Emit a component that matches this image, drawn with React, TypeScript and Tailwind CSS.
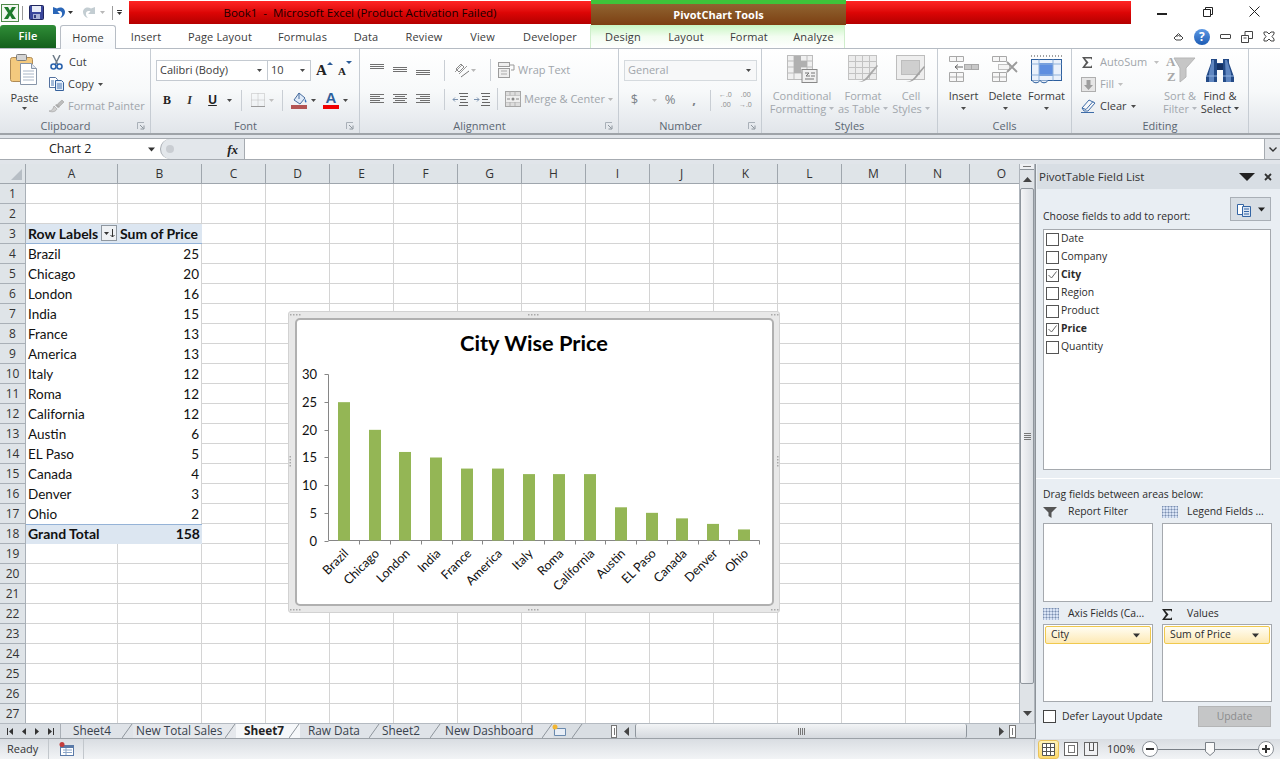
import React from "react";

const Caret = ({ c = "text-[#4a4a4a]", w = 5 }: { c?: string; w?: number }) => (
  <svg width={w} height={Math.ceil(w * 0.6)} viewBox="0 0 5 3" className={c + " shrink-0"}>
    <path d="M0 0h5L2.500 3z" fill="currentColor" />
  </svg>
);

const Lines = ({ rows, color = "#707070" }: { rows: [number, number, number][]; color?: string }) => (
  <svg width="16" height="16" viewBox="0 0 16 16">
    {rows.map((r, i) => (
      <rect key={i} x={r[0]} y={r[1]} width={r[2]} height="1" fill={color} />
    ))}
  </svg>
);

const Launcher = () => (
  <svg width="8" height="8" viewBox="0 0 8 8" className="shrink-0">
    <path d="M0.500 7V0.500H7" fill="none" stroke="#a9b0b8" />
    <path d="M3 3l3.500 3.500M7 3.500V7H3.500" fill="none" stroke="#8c949c" />
  </svg>
);

const Group = ({ w, label, launcher, children }: { w: string; label: string; launcher?: boolean; children: React.ReactNode }) => (
  <div className={w + " h-full flex flex-col border-r border-[#c6ccd3] shrink-0"}>
    <div className="h-[70px] flex">{children}</div>
    <div className={"h-[16px] relative flex items-center justify-center text-[11px] leading-none text-[#5b6672] " + (launcher ? "pr-[19px]" : "")}>
      {label}
      {launcher && (
        <span className="absolute right-[5px] top-[5px] flex">
          <Launcher />
        </span>
      )}
    </div>
  </div>
);

const Sep = ({ h = "h-[21px]" }: { h?: string }) => <div className={"w-px bg-[#c9ced4] shrink-0 " + h} />;

const ExcelLogo = () => (
  <svg width="18" height="18" viewBox="0 0 18 18">
    <rect x="0.500" y="0.500" width="17" height="17" fill="#f4f8f2" stroke="#4f8a4a" />
    <path d="M3 3h4l2 3.500L11 3h4l-4 6 4 6h-4l-2-3.500L7 15H3l4-6z" fill="#1f7a2c" />
  </svg>
);
const Save = () => (
  <svg width="15" height="15" viewBox="0 0 15 15">
    <rect x="0.500" y="0.500" width="14" height="14" rx="1" fill="#3a479c" stroke="#20265e" />
    <rect x="3" y="1" width="9" height="6" fill="#e8ecf7" />
    <rect x="4" y="9" width="7" height="5" fill="#aab2d6" />
    <rect x="5" y="10" width="2" height="3" fill="#333c80" />
  </svg>
);
const Undo = ({ color }: { color: string }) => (
  <svg width="14" height="14" viewBox="0 0 14 14">
    <path d="M1 1v7h7L5.500 5.500C7 4.500 9.500 5 10 7c.4 1.800-.3 3.500-2 5 3-.7 5-3 5-6 0-3.500-4-6-8-3.500z" fill={color} />
  </svg>
);
const Redo = () => (
  <svg width="14" height="14" viewBox="0 0 14 14">
    <path d="M13 1v7H6l2.500-2.500C7 4.500 4.500 5 4 7c-.4 1.800.3 3.500 2 5-3-.7-5-3-5-6 0-3.500 4-6 8-3.500z" fill="#c3cdd2" />
  </svg>
);

const Paste = () => (
  <svg width="28" height="31" viewBox="0 0 28 31">
    <rect x="0.500" y="3.500" width="22" height="24" rx="2" fill="#f3c97e" stroke="#b08b55" />
    <rect x="6.500" y="0.500" width="10" height="6" rx="1" fill="#d4d4d4" stroke="#7d7d7d" />
    <path d="M10.500 9.500h11l5 5v16h-16z" fill="#fff" stroke="#8795a8" />
    <path d="M21.500 9.500v5h5" fill="#dfe6f0" stroke="#8795a8" />
    <path d="M13 17h11M13 20h11M13 23h11M13 26h11" stroke="#a8b5c6" />
  </svg>
);
const Cut = () => (
  <svg width="13" height="15" viewBox="0 0 13 15">
    <path d="M3 0l5 10M10 0L5 10" stroke="#6d7a88" strokeWidth="1.500" />
    <circle cx="3.500" cy="11.500" r="2.500" fill="none" stroke="#2a62ac" strokeWidth="1.600" />
    <circle cx="9.500" cy="11.500" r="2.500" fill="none" stroke="#2a62ac" strokeWidth="1.600" />
  </svg>
);
const Copy = () => (
  <svg width="15" height="14" viewBox="0 0 15 14">
    <path d="M0.500 0.500h6l2 2v8h-8z" fill="#fff" stroke="#53719f" />
    <path d="M6.500 3.500h6l2 2v8h-8z" fill="#e3ecf8" stroke="#35619c" />
    <path d="M8 7h5M8 9h5M8 11h5M2 4h3M2 6h3M2 8h3" stroke="#4a78b4" />
  </svg>
);
const Painter = () => (
  <svg width="16" height="14" viewBox="0 0 16 14">
    <path d="M0 12c3 0 4-2 5-5l3 3c-1 2-4 4-8 2z" fill="#cfcfcf" stroke="#9c9c9c" strokeWidth=".6" />
    <path d="M6 6l3 3 2-1-3-3z" fill="#aaa" />
    <path d="M8.500 5L13 1l2 2-4.500 4.500z" fill="#bcbcbc" stroke="#999" strokeWidth=".5" />
  </svg>
);
const Borders = () => (
  <svg width="14" height="14" viewBox="0 0 14 14">
    <path d="M.5.500h13v13H.5zM7 .5v13M.5 7h13" fill="none" stroke="#bcbcbc" strokeDasharray="1 1" />
    <path d="M0 13.500h14" stroke="#9a9a9a" />
  </svg>
);
const FillColor = () => (
  <svg width="17" height="17" viewBox="0 0 17 17">
    <path d="M8 1l6 5-5 6-6-4z" fill="#dfeaf8" stroke="#466c9e" />
    <path d="M8 1v6" stroke="#466c9e" />
    <path d="M14 7c1.500 1.500 2 3 1 3.500s-1.600-1.500-1-3.500z" fill="#3672bb" />
    <rect x="0" y="13" width="16" height="4" fill="#b35453" />
  </svg>
);
const Orientation = () => (
  <svg width="16" height="15" viewBox="0 0 16 15">
    <path d="M2 6l5-5 3 3-5 5z" fill="none" stroke="#888" />
    <path d="M1 9l7-7M5 11l8-8" stroke="#999" />
    <path d="M7 14l8-6" stroke="#777" />
  </svg>
);
const Indent = ({ right }: { right?: boolean }) => (
  <svg width="16" height="13" viewBox="0 0 16 13">
    <path d={right ? "M0 6.500h5M3 4.500l2 2-2 2" : "M6 6.500H1M3 4.500l-2 2 2 2"} fill="none" stroke="#7c93b0" />
    <path d="M7 .5h9M8 3.500h8M8 6.500h6M8 9.500h8M7 12.500h9" stroke="#666" />
  </svg>
);
const WrapIcon = () => (
  <svg width="17" height="16" viewBox="0 0 17 16">
    <rect x="0.500" y="0.500" width="11" height="4" fill="#eee" stroke="#9b9b9b" />
    <rect x="0.500" y="6.500" width="11" height="9" fill="#eee" stroke="#9b9b9b" />
    <path d="M3 9h6M3 12h6" stroke="#aaa" />
    <path d="M12 3h4v5h-3" fill="none" stroke="#999" />
  </svg>
);
const MergeIcon = () => (
  <svg width="16" height="16" viewBox="0 0 16 16">
    <rect x="0.500" y="0.500" width="15" height="15" fill="#ddd" stroke="#a6a6a6" />
    <path d="M.5 5h15M.5 11h15M5 .5v4M10 .5v4M5 11v4M10 11v4" stroke="#b3b3b3" />
    <rect x="1" y="5" width="14" height="6" fill="#eee" />
    <path d="M2 8h3M14 8h-3" stroke="#888" />
    <circle cx="8" cy="8" r="1.500" fill="#888" />
  </svg>
);
const CondFormat = () => (
  <svg width="31" height="28" viewBox="0 0 31 28">
    <rect x="0.500" y="0.500" width="25" height="24" fill="#f0f0f0" stroke="#bcbcbc" />
    <path d="M7 .5v24M20 .5v24M.5 6h25M.5 12h25M.5 18h25" stroke="#bcbcbc" />
    <path d="M7 1h7v5h6v6h-6v6H7z" fill="#b0b0b0" />
    <rect x="15" y="14.500" width="15" height="13" fill="#f0f0f0" stroke="#888" />
    <path d="M18 18h4l-3 3h4M24 18h4M24 21h4M18 24h9" fill="none" stroke="#777" />
  </svg>
);
const FmtTable = () => (
  <svg width="31" height="28" viewBox="0 0 31 28">
    <rect x="0.500" y="0.500" width="28" height="24" fill="#ececec" stroke="#c2c2c2" />
    <path d="M7.500 .5v24M14.500 .5v24M21.500 .5v24M.5 6.500h28M.5 12.500h28M.5 18.500h28" stroke="#c2c2c2" />
    <path d="M10 27c5 0 8-4 11-8l8-9 1 1-8 10c-3 4-6 6-12 6z" fill="#a8a8a8" />
  </svg>
);
const CellStyle = () => (
  <svg width="30" height="28" viewBox="0 0 30 28">
    <rect x="0.500" y="0.500" width="28" height="24" fill="#eee" stroke="#bdbdbd" />
    <rect x="5.500" y="5.500" width="18" height="14" fill="#cfcfcf" stroke="#bdbdbd" />
    <path d="M10 27c5 0 8-4 11-8l7-8 1 1-8 10c-3 4-6 5-11 5z" fill="#a2a2a2" />
  </svg>
);
const InsertIcon = () => (
  <svg width="30" height="26" viewBox="0 0 30 26">
    <path d="M.5.500h14v5H.5zM7.500.5v5M.5 16.500h14v9H.5zM7.500 16.500v9M.5 21h14" fill="#f7f7f7" stroke="#a8a8a8" />
    <rect x="15.500" y="8.500" width="14" height="5" fill="#c8c8c8" stroke="#a8a8a8" />
    <path d="M22.500 8.500v5" stroke="#a8a8a8" />
    <path d="M6 11h8M6 11l3-2.500M6 11l3 2.500" fill="none" stroke="#666" />
  </svg>
);
const DeleteIcon = () => (
  <svg width="26" height="26" viewBox="0 0 26 26">
    <path d="M.5.500h14v5H.5zM7.500.5v5M.5 16.500h14v9H.5zM7.500 16.500v9M.5 21h14" fill="#f7f7f7" stroke="#a8a8a8" />
    <rect x="6.500" y="8.500" width="11" height="5" fill="#f4f4f4" stroke="#888" strokeDasharray="1 1" />
    <path d="M15 6l10 10M25 6L15 16" stroke="#9b9b9b" strokeWidth="1.800" />
  </svg>
);
const FormatIcon = () => (
  <svg width="31" height="29" viewBox="0 0 31 29">
    <path d="M0 1h31" stroke="#444" strokeDasharray="1 2" />
    <rect x="0.500" y="4.500" width="30" height="21" fill="#eaf1fb" stroke="#2d5f9e" />
    <rect x="8" y="8" width="14" height="13" fill="#5e8ee0" />
    <path d="M8 4.500v21M22 4.500v21M.5 9h30M.5 20h30" stroke="#8fb1da" />
    <path d="M1 25.500c2 3 6 3 8 0M9 25.500c2 3 6 3 8 0" fill="#eaf1fb" stroke="#2d5f9e" />
  </svg>
);
const Sigma = ({ c = "#555" }: { c?: string }) => (
  <svg width="11" height="11" viewBox="0 0 11 11">
    <path d="M0 0h10v3L9 1.500H3L6.500 5.500 3 9.500h6L10 8v3H0l4-5.500z" fill={c} />
  </svg>
);
const FillIcon = () => (
  <svg width="15" height="15" viewBox="0 0 15 15">
    <rect x="0.500" y="0.500" width="14" height="14" fill="#e6e6e6" stroke="#aeaeae" />
    <path d="M5.500 3h4v5H12l-4.500 5L3 8h2.500z" fill="#9d9d9d" />
  </svg>
);
const Eraser = () => (
  <svg width="15" height="14" viewBox="0 0 15 14">
    <path d="M1 9l7-8 6 3-7 8H3z" fill="#f6f7f9" stroke="#3d6ca8" />
    <path d="M1 9l4 1.500L12 2.500" fill="none" stroke="#3d6ca8" />
    <path d="M0 13.500h13" stroke="#3d6ca8" />
  </svg>
);
const SortFilter = () => (
  <svg width="31" height="28" viewBox="0 0 31 28">
    <path d="M9 3h21L21 13v9l-6 5V13z" fill="#c6c6c6" stroke="#b6b6b6" />
    <text x="1" y="11" fontSize="13" fontWeight="700" fontFamily="Liberation Serif, serif" fill="#a8a8a8">A</text>
    <text x="2" y="26" fontSize="13" fontWeight="700" fontFamily="Liberation Serif, serif" fill="#a8a8a8">Z</text>
  </svg>
);
const Binoculars = () => (
  <svg width="28" height="27" viewBox="0 0 28 27">
    <path d="M5 3h6v4h6V3h6v4l5 14v5H17V14h-6v12H0v-5L5 7z" fill="#234a86" />
    <path d="M6 4h2v22H3V17zM19 4h2l4 13v9h-5z" fill="#5f86c0" />
    <rect x="11" y="8" width="6" height="6" fill="#153264" />
    <path d="M0 20h11M17 20h11" stroke="#8fb0de" />
  </svg>
);

const TitleBar = () => (
  <div className="h-[25px] flex bg-white shrink-0">
    <div className="w-[129px] flex items-center shrink-0 pl-[1px]">
      <ExcelLogo />
      <div className="w-px h-[14px] bg-[#9a9a9a] ml-[3px]" />
      <div className="ml-[6px] flex"><Save /></div>
      <div className="ml-[8px] flex"><Undo color="#2a66b8" /></div>
      <div className="ml-[2px] mr-[9px]"><Caret c="text-[#333]" /></div>
      <Redo />
      <div className="ml-[4px]"><Caret c="text-[#b8b8b8]" /></div>
      <div className="w-px h-[14px] bg-[#9a9a9a] ml-[7px]" />
      <div className="ml-[4px] flex flex-col items-center gap-[1px]">
        <div className="w-[5px] h-px bg-[#333]" />
        <Caret c="text-[#333]" />
      </div>
    </div>
    <div className="w-[462px] h-[23px] mt-[1px] shrink-0 bg-gradient-to-b from-[#ff2424] via-[#dd0606] to-[#b40000] flex items-center justify-center text-[11.500px] text-[#180000]">
      Book1&nbsp; -&nbsp; Microsoft Excel (Product Activation Failed)
    </div>
    <div className="w-[255px] shrink-0 flex flex-col">
      <div className="h-[4px] bg-[#3fc33a]" />
      <div className="flex-1 bg-gradient-to-b from-[#8f6430] to-[#7c3f12] flex items-center justify-center text-[11px] font-bold text-white pt-[1px]">
        PivotChart Tools
      </div>
    </div>
    <div className="w-[285px] h-[23px] mt-[1px] shrink-0 bg-gradient-to-b from-[#ff2424] via-[#dd0606] to-[#b40000]" />
    <div className="flex-1 flex items-center pl-[26px] pb-[2px]">
      <div className="w-[10px] h-[1.500px] bg-[#222] mt-[5px]" />
      <svg width="10" height="10" viewBox="0 0 10 10" className="ml-[36px]">
        <path d="M.5 2.500h7v7h-7zM2.500 2.500v-2h7v7h-2" fill="none" stroke="#222" />
      </svg>
      <svg width="11" height="11" viewBox="0 0 11 11" className="ml-[36px]">
        <path d="M.5.500l10 10M10.500.500l-10 10" stroke="#222" />
      </svg>
    </div>
  </div>
);

const tabs: [string, string][] = [
  ["Insert", "w-[58px]"],
  ["Page Layout", "w-[90px]"],
  ["Formulas", "w-[75px]"],
  ["Data", "w-[52px]"],
  ["Review", "w-[64px]"],
  ["View", "w-[53px]"],
  ["Developer", "w-[82px]"],
];
const ctxTabs: [string, string][] = [
  ["Design", "w-[64px]"],
  ["Layout", "w-[62px]"],
  ["Format", "w-[64px]"],
  ["Analyze", "w-[65px]"],
];

const TabRow = () => (
  <div className="h-[23px] flex bg-white shrink-0 relative text-[11px] tracking-[0.15px] text-[#3b3b3b]">
    <div className="w-[56px] h-[23px] rounded-t-[3px] bg-gradient-to-b from-[#2f8d37] to-[#14601c] text-white font-semibold flex items-center justify-center shrink-0">
      File
    </div>
    <div className="w-[4px] shrink-0" />
    <div className="w-[56px] h-[24px] border border-b-0 border-[#b7bdc5] rounded-t-[3px] bg-gradient-to-b from-white to-[#f7f9fb] flex items-center justify-center shrink-0 z-10 pt-[2px]">
      Home
    </div>
    <div className="w-[1px] shrink-0" />
    {tabs.map(([t, w]) => (
      <div key={t} className={w + " flex items-center justify-center shrink-0 pt-[2px]"}>{t}</div>
    ))}
    <div className="w-[255px] -ml-[1px] flex shrink-0 bg-gradient-to-b from-[#c8f5c2] via-[#f2fdf0] to-white border-x border-[#cfeecb]">
      {ctxTabs.map(([t, w]) => (
        <div key={t} className={w + " flex items-center justify-center shrink-0 pt-[2px]"}>{t}</div>
      ))}
    </div>
    <div className="flex-1 flex items-center justify-end pr-[5px] gap-[10px]">
      <svg width="11" height="9" viewBox="0 0 11 9">
        <path d="M1 6l4.500-4.500L10 6 8 8H3zM3.500 5l2-2 2 2" fill="none" stroke="#444" />
      </svg>
      <div className="w-[16px] h-[16px] rounded-full bg-gradient-to-b from-[#5c98e4] to-[#1c5cb4] text-white text-[12px] font-bold flex items-center justify-center">?</div>
      <div className="w-[11px] h-[5px] border border-[#444] rounded-[1px]" />
      <svg width="12" height="12" viewBox="0 0 12 12">
        <path d="M.5 4.500h7v7h-7zM4 4.500v-4h7.500v7h-4M2.500 7h3" fill="none" stroke="#444" />
      </svg>
      <svg width="12" height="11" viewBox="0 0 12 11">
        <path d="M1 1h3l2 2 2-2h3v2L9 5.500 11 8v2H8L6 8l-2 2H1V8l2-2.500L1 3z" fill="none" stroke="#444" />
      </svg>
    </div>
  </div>
);

const G = ({ children, cls = "" }: { children: React.ReactNode; cls?: string }) => (
  <div className={"flex items-center " + cls}>{children}</div>
);

const BigBtn = ({ w, icon, l1, l2, dis }: { w: string; icon: React.ReactNode; l1: string; l2?: string; dis?: boolean }) => (
  <div className={w + " flex flex-col items-center shrink-0 text-[11px] leading-[13px] " + (dis ? "text-[#a2a7ad]" : "text-[#3b3b3b]")}>
    <div className="h-[32px] mt-[4px] flex items-center justify-center">{icon}</div>
    <div className="mt-[4px] whitespace-nowrap">{l1}</div>
    {l2 ? (
      <div className="whitespace-nowrap flex items-center gap-[3px]">
        {l2}
        <Caret c={dis ? "text-[#b5b9be]" : "text-[#444]"} />
      </div>
    ) : (
      <div className="mt-[5px]"><Caret /></div>
    )}
  </div>
);

const Ribbon = () => (
  <div className="h-[87px] shrink-0 flex bg-gradient-to-b from-white via-[#f7f9fa] to-[#e1e5ea] border-t border-[#b5bbc3] border-b-[2px] border-b-[#9ea3a8] text-[11px] text-[#3b3b3b] box-border">
    <Group w="w-[151px]" label="Clipboard" launcher>
      <div className="w-[49px] flex flex-col items-center pt-[5px] shrink-0">
        <div className="h-[31px] -ml-[1px]"><Paste /></div>
        <div className="mt-[6px] leading-[13px]">Paste</div>
        <div className="mt-[3px]"><Caret /></div>
      </div>
      <div className="flex flex-col pt-[2px]">
        <G cls="h-[22px] gap-[5px]"><div className="w-[15px] flex justify-center"><Cut /></div>Cut</G>
        <G cls="h-[22px] gap-[4px]"><Copy />Copy<Caret /></G>
        <G cls="h-[22px] gap-[3px] text-[#a0a5ab]"><Painter />Format Painter</G>
      </div>
    </Group>
    <Group w="w-[209px]" label="Font" launcher>
      <div className="flex flex-col pl-[5px] pt-[11px]">
        <div className="flex items-center h-[21px]">
          <div className="w-[112px] h-[21px] border border-[#c4cad1] bg-white flex items-center justify-between px-[3px] pr-[5px]">
            Calibri (Body)<Caret />
          </div>
          <div className="w-[43px] h-[21px] border border-l-0 border-[#c4cad1] bg-white flex items-center justify-between px-[3px] pr-[5px]">
            10<Caret />
          </div>
          <div className="ml-[5px] w-[17px] text-[15px] font-bold font-['Liberation_Serif',serif] text-[#222] relative leading-none">
            A<span className="absolute -top-[1px] right-0"><svg width="6" height="3"><path d="M0 3L3 0l3 3z" fill="#2b5c98" /></svg></span>
          </div>
          <div className="ml-[5px] w-[14px] text-[11px] font-bold font-['Liberation_Serif',serif] text-[#222] relative leading-none pt-[2px]">
            A<span className="absolute -top-[3px] right-0"><svg width="6" height="3"><path d="M0 0h6L3 3z" fill="#2b5c98" /></svg></span>
          </div>
        </div>
        <div className="flex items-center h-[22px] mt-[8px]">
          <div className="w-[22px] text-center font-bold text-[12px] font-['Liberation_Serif',serif] text-[#222]">B</div>
          <div className="w-[23px] text-center font-bold italic text-[12px] font-['Liberation_Serif',serif] text-[#333]">I</div>
          <div className="w-[23px] text-center font-bold underline text-[12px] font-['Liberation_Sans',sans-serif] text-[#222]">U</div>
          <div className="w-[10px] flex justify-center"><Caret /></div>
          <div className="w-[7px]" /><Sep />
          <div className="ml-[9px]"><Borders /></div>
          <div className="ml-[4px]"><Caret c="text-[#c0c0c0]" /></div>
          <div className="w-[8px]" /><Sep />
          <div className="ml-[8px] flex"><FillColor /></div>
          <div className="ml-[3px]"><Caret /></div>
          <div className="ml-[7px] w-[16px] flex flex-col items-center">
            <span className="text-[15px] leading-[14px] font-bold text-[#2e5f9c] font-['Liberation_Sans',sans-serif]">A</span>
            <span className="w-[16px] h-[4px] bg-[#f00000]" />
          </div>
          <div className="ml-[4px]"><Caret /></div>
        </div>
      </div>
    </Group>
    <Group w="w-[259px]" label="Alignment" launcher>
      <div className="flex flex-col pl-[9px] pt-[10px]">
        <div className="flex items-center h-[22px]">
          <div className="w-[23px] flex"><Lines rows={[[1, 2, 14], [1, 4, 14], [1, 6, 14]]} /></div>
          <div className="w-[23px] flex"><Lines rows={[[1, 5, 14], [1, 7, 14], [1, 9, 14]]} /></div>
          <div className="w-[23px] flex"><Lines rows={[[1, 8, 14], [1, 10, 14], [1, 12, 14]]} /></div>
          <div className="w-[6px]" /><Sep />
          <div className="ml-[9px] flex"><Orientation /></div>
          <div className="ml-[1px]"><Caret c="text-[#b8b8b8]" /></div>
          <div className="w-[14px]" /><Sep h="h-[22px]" />
          <div className="ml-[7px] flex items-center gap-[3px] text-[#a0a5ab]"><WrapIcon />Wrap Text</div>
        </div>
        <div className="flex items-center h-[22px] mt-[7px]">
          <div className="w-[23px] flex"><Lines rows={[[1, 3, 14], [1, 5, 10], [1, 7, 14], [1, 9, 10], [1, 11, 14]]} /></div>
          <div className="w-[23px] flex"><Lines rows={[[1, 3, 14], [3, 5, 10], [1, 7, 14], [3, 9, 10], [1, 11, 14]]} /></div>
          <div className="w-[23px] flex"><Lines rows={[[1, 3, 14], [5, 5, 10], [1, 7, 14], [5, 9, 10], [1, 11, 14]]} /></div>
          <div className="w-[6px]" /><Sep />
          <div className="ml-[7px] flex"><Indent /></div>
          <div className="ml-[6px] flex"><Indent right /></div>
          <div className="w-[7px]" /><Sep h="h-[22px]" />
          <div className="ml-[7px] flex items-center gap-[3px] text-[#a0a5ab]"><MergeIcon />Merge &amp; Center<Caret c="text-[#b8b8b8]" /></div>
        </div>
      </div>
    </Group>
    <Group w="w-[143px]" label="Number" launcher>
      <div className="flex flex-col pl-[5px] pt-[11px]">
        <div className="w-[133px] h-[21px] border border-[#d5dade] bg-[#f7f8f9] text-[#a0a5ab] flex items-center justify-between px-[3px] pr-[5px]">
          General<Caret />
        </div>
        <div className="flex items-center h-[22px] mt-[8px] text-[#7c8288] text-[13px]">
          <div className="w-[21px] text-center">$</div>
          <div className="w-[15px] flex justify-center ml-[2px]"><Caret c="text-[#c0c0c0]" /></div>
          <div className="w-[16px] text-center">%</div>
          <div className="w-[32px] text-center font-bold">,</div>
          <Sep />
          <div className="ml-[8px] w-[16px] text-[7px] leading-[10px] whitespace-nowrap text-[#8a8a8a]">←.0<br />&nbsp;.00</div>
          <div className="ml-[4px] w-[18px] text-[7px] leading-[10px] whitespace-nowrap text-[#8a8a8a]">&nbsp;.00<br />→.0</div>
        </div>
      </div>
    </Group>
    <Group w="w-[176px]" label="Styles">
      <BigBtn w="w-[80px]" icon={<CondFormat />} l1="Conditional" l2="Formatting" dis />
      <BigBtn w="w-[42px]" icon={<FmtTable />} l1="Format" l2="as Table" dis />
      <BigBtn w="w-[54px]" icon={<CellStyle />} l1="Cell" l2="Styles" dis />
    </Group>
    <Group w="w-[134px]" label="Cells">
      <div className="w-[6px]" />
      <BigBtn w="w-[39px]" icon={<InsertIcon />} l1="Insert" />
      <BigBtn w="w-[44px]" icon={<DeleteIcon />} l1="Delete" />
      <BigBtn w="w-[39px]" icon={<FormatIcon />} l1="Format" />
    </Group>
    <Group w="w-[177px]" label="Editing">
      <div className="flex flex-col pt-[2px] pl-[9px] w-[89px] shrink-0">
        <G cls="h-[22px] gap-[7px] text-[#a0a5ab]"><div className="w-[12px] flex justify-center"><Sigma /></div>AutoSum<Caret c="text-[#c0c0c0]" /></G>
        <G cls="h-[22px] gap-[4px] text-[#a0a5ab]"><FillIcon />Fill<Caret c="text-[#c0c0c0]" /></G>
        <G cls="h-[22px] gap-[4px]"><Eraser />Clear<Caret /></G>
      </div>
      <BigBtn w="w-[38px]" icon={<SortFilter />} l1="Sort &" l2="Filter" dis />
      <BigBtn w="w-[42px]" icon={<Binoculars />} l1="Find &" l2="Select" />
    </Group>
  </div>
);

const FormulaBar = () => (
  <div className="h-[22px] mt-[3px] shrink-0 flex bg-white border-y border-[#a6abb1] text-[12.500px] text-[#222]">
    <div className="w-[160px] shrink-0 flex items-center justify-between pl-[49px] pr-[5px] pt-[1px]">
      Chart 2<Caret c="text-[#333]" w={7} />
    </div>
    <div className="w-[85px] shrink-0 rounded-l-full bg-[#e3e7eb] border-l border-[#a6abb1] border-r flex items-center justify-between pl-[5px] pr-[6px]">
      <span className="w-[8px] h-[8px] rounded-full bg-[#c9cdd2]" />
      <span className="font-['Liberation_Serif',serif] italic font-bold text-[13px] leading-none">fx</span>
    </div>
    <div className="flex-1" />
    <div className="w-[16px] shrink-0 bg-[#e1e4e8] border-l border-[#a6abb1] flex items-center justify-center">
      <svg width="8" height="5" viewBox="0 0 8 5"><path d="M.5.500L4 4l3.500-3.500" fill="none" stroke="#333" strokeWidth="1.400" /></svg>
    </div>
  </div>
);

const rows: Record<number, [string, string]> = {
  3: ["Row Labels", "Sum of Price"],
  4: ["Brazil", "25"], 5: ["Chicago", "20"], 6: ["London", "16"], 7: ["India", "15"],
  8: ["France", "13"], 9: ["America", "13"], 10: ["Italy", "12"], 11: ["Roma", "12"],
  12: ["California", "12"], 13: ["Austin", "6"], 14: ["EL Paso", "5"], 15: ["Canada", "4"],
  16: ["Denver", "3"], 17: ["Ohio", "2"], 18: ["Grand Total", "158"],
};
const cols = "CDEFGHIJKLMNO".split("");
const rowNums = Array.from({ length: 27 }, (_, i) => i + 1);

const Sheet = () => (
  <div className="h-[559px] overflow-hidden relative bg-white font-['Lato',sans-serif] text-[13.500px] text-[#111]">
    <div className="grid grid-cols-[26px_92px_84px_repeat(13,64px)] grid-rows-[20px_repeat(27,20px)] w-[1034px]">
      <div className="bg-[#dfe4e8] border-r border-b border-[#9fa6ad] flex items-end justify-end p-[3px]">
        <svg width="11" height="11" viewBox="0 0 11 11"><path d="M11 0v11H0z" fill="#b7bec5" /></svg>
      </div>
      {["A", "B", ...cols].map((c) => (
        <div key={c} className="bg-[#dfe4e8] border-r border-b border-[#9fa6ad] flex items-center justify-center font-['Open_Sans',sans-serif] text-[12px] text-[#333]">
          {c}
        </div>
      ))}
      {rowNums.map((n) => {
        const r = rows[n];
        const hl = n === 3 || n === 18;
        return (
          <React.Fragment key={n}>
            <div className="bg-[#dfe4e8] border-r border-b border-[#a9b0b7] flex items-center justify-center font-['Open_Sans',sans-serif] text-[12px] text-[#333]">
              {n}
            </div>
            <div
              className={
                "flex items-center pl-[2px] relative " +
                (hl
                  ? "bg-[#dce6f1] font-bold text-[14px] border-b " + (n === 3 ? "border-[#95b3d7]" : "border-[#dce6f1] border-t border-t-[#95b3d7] pb-[1px]")
                  : r ? "" : "border-b border-r border-[#d4d4d4]")
              }
            >
              {r ? r[0] : ""}
              {n === 3 && (
                <div className="absolute right-[1px] top-[1px] w-[16px] h-[16px] bg-[#eef1f4] border border-[#8f979f] flex items-center justify-center gap-[1px]">
                  <Caret c="text-[#333]" />
                  <svg width="5" height="9" viewBox="0 0 5 9"><path d="M2.500 0v8M.5 6l2 2 2-2" fill="none" stroke="#333" /></svg>
                </div>
              )}
            </div>
            <div
              className={
                "flex items-center justify-end " +
                (n === 3 ? "pr-[4px] " : "pr-[2px] ") +
                (hl
                  ? "bg-[#dce6f1] font-bold text-[14px] whitespace-nowrap border-b " + (n === 3 ? "border-[#95b3d7]" : "border-[#dce6f1] border-t border-t-[#95b3d7] pb-[1px]")
                  : "border-r border-[#d4d4d4] " + (r ? "" : "border-b"))
              }
            >
              {r ? r[1] : ""}
            </div>
            {cols.map((c) => (
              <div key={c} className="border-r border-b border-[#d4d4d4]" />
            ))}
          </React.Fragment>
        );
      })}
    </div>
    <Chart />
  </div>
);

const data = [25, 20, 16, 15, 13, 13, 12, 12, 12, 6, 5, 4, 3, 2];
const names = ["Brazil", "Chicago", "London", "India", "France", "America", "Italy", "Roma", "California", "Austin", "EL Paso", "Canada", "Denver", "Ohio"];
const X0 = 328.5, Y0 = 540.5, SX = 30.77, SY = 166 / 30;

const Handle = ({ x, y, vert }: { x: number; y: number; vert?: boolean }) => (
  <g fill="#a9a9a9">
    {[0, 1, 2, 3].map((i) => (
      <rect key={i} x={vert ? x : x + i * 3} y={vert ? y + i * 3 : y} width="1.500" height="1.500" />
    ))}
  </g>
);

const Chart = () => (
  <div className="absolute left-[288px] top-[147px] w-[492px] h-[302px] bg-[#e8e8e8] border border-[#d2d2d2] rounded-[3px] pl-[6px] pt-[6px] pb-[6px] pr-[5px]">
    <div className="w-full h-full bg-white border-[2px] border-[#b0b0b0] rounded-[5px] overflow-visible relative">
      <svg className="absolute -left-[9px] -top-[9px] w-[492px] h-[302px]" viewBox="288 311 492 302">
        <Handle x={528} y={314} />
        <Handle x={528} y={609} />
        <Handle x={289.5} y={456} vert />
        <Handle x={777} y={456} vert />
        <Handle x={290} y={314} />
        <Handle x={771} y={314} />
        <Handle x={290} y={609} />
        <Handle x={771} y={609} />
        <text x="534" y="351" textAnchor="middle" fontFamily="Lato, sans-serif" fontWeight="700" fontSize="21.800" fill="#000">City Wise Price</text>
        <path d={`M${X0} 374.500V${Y0}H759.500`} fill="none" stroke="#868686" />
        {[0, 1, 2, 3, 4, 5, 6].map((i) => (
          <g key={i}>
            <path d={`M${X0 - 4} ${Math.round(Y0 - i * 27.67) + 0.5}H${X0}`} stroke="#868686" />
            <text x="317" y={Y0 - i * 27.67 + 5} textAnchor="end" fontFamily="Lato, sans-serif" fontSize="13" fill="#111">{i * 5}</text>
          </g>
        ))}
        {data.map((d, i) => {
          const cx = X0 + SX * (i + 0.5);
          const h = d * SY;
          return (
            <g key={i}>
              <rect x={Math.round(cx - 6)} y={Y0 - h} width="12" height={h} fill="#94b655" />
              <path d={`M${Math.round(X0 + SX * (i + 1)) + 0.5} ${Y0}v4`} stroke="#868686" />
              <text
                transform={`translate(${cx + 3} 552) rotate(-45)`}
                textAnchor="end"
                dominantBaseline="middle"
                fontFamily="Lato, sans-serif"
                fontSize="12.500"
                fill="#111"
              >
                {names[i]}
              </text>
            </g>
          );
        })}
      </svg>
    </div>
  </div>
);

const VScroll = () => (
  <div className="w-[16px] shrink-0 h-full flex flex-col bg-[#dfe3e7] border-x border-[#aeb4bb]">
    <div className="h-[6px] bg-[#eef0f3] border-b border-[#8d949b] flex items-center justify-center">
      <div className="w-[8px] h-px bg-[#777]" />
    </div>
    <div className="h-[18px] flex items-center justify-center"><svg width="9" height="5" viewBox="0 0 9 5"><path d="M0 5L4.500 0 9 5z" fill="#444" /></svg></div>
    <div className="h-[496px] rounded-[2px] bg-gradient-to-r from-[#f4f5f7] to-[#d9dde2] border border-[#8f969d] flex items-center justify-center">
      <div className="flex flex-col gap-px">
        <div className="w-[7px] h-px bg-[#777]" /><div className="w-[7px] h-px bg-[#777]" /><div className="w-[7px] h-px bg-[#777]" /><div className="w-[7px] h-px bg-[#777]" />
      </div>
    </div>
    <div className="flex-1 flex flex-col justify-end items-center pb-[7px]">
      <svg width="9" height="5" viewBox="0 0 9 5"><path d="M0 0h9L4.500 5z" fill="#444" /></svg>
    </div>
  </div>
);

const sheetTabs: [string, string, boolean?][] = [
  ["Sheet4", "w-[72px] pl-[12px]"],
  ["New Total Sales", "w-[103px] pl-[3px]"],
  ["Sheet7", "w-[64px] pl-[8px]", true],
  ["Raw Data", "w-[80px] pl-[8px]"],
  ["Sheet2", "w-[61px] pl-[2px]"],
  ["New Dashboard", "w-[112px] pl-[4px]"],
];

const SheetTabs = () => (
  <div className="h-[16px] shrink-0 flex items-center bg-[#d9dee3] border-t border-[#b4bac1] border-b border-b-[#9ba1a7] text-[11.800px] text-[#39424c]">
    <div className="w-[61px] shrink-0 flex items-center justify-center gap-[9px] border-r border-[#a9afb6] h-full">
      <svg width="6" height="7" viewBox="0 0 6 7"><path d="M0 0h1v7H0zM6 0v7L2 3.500z" fill="#333" /></svg>
      <svg width="4" height="7" viewBox="0 0 4 7"><path d="M4 0v7L0 3.500z" fill="#333" /></svg>
      <svg width="4" height="7" viewBox="0 0 4 7"><path d="M0 0v7l4-3.500z" fill="#333" /></svg>
      <svg width="6" height="7" viewBox="0 0 6 7"><path d="M6 0H5v7h1zM0 0v7l4-3.500z" fill="#333" /></svg>
    </div>
    {sheetTabs.map(([t, w, active], i) => (
      <div
        key={t}
        className={w + " h-full shrink-0 flex items-center relative whitespace-nowrap " + (active ? "bg-[#f6f8fa] font-bold text-[#222]" : i === 1 ? "bg-[#e5e8ec]" : "bg-[#dfe3e8]")}
      >
        {t}
        <svg width="11" height="14" viewBox="0 0 11 14" className="absolute right-0 top-0">
          <path d="M0 14L10 0" stroke="#8e959c" />
        </svg>
      </div>
    ))}
    <div className="w-[31px] h-full shrink-0 flex items-center relative -ml-[1px]">
      <svg width="15" height="14" viewBox="0 0 15 14">
        <path d="M2.500 4.500h11v7h-11z" fill="#e8eef6" stroke="#6a8aae" />
        <circle cx="3" cy="3" r="2.500" fill="#f2b632" />
      </svg>
      <svg width="11" height="14" viewBox="0 0 11 14" className="absolute right-0 top-0"><path d="M0 14L10 0" stroke="#8e959c" /></svg>
    </div>
    <div className="flex-1" />
    <div className="w-[6px] h-[13px] bg-white border border-[#777] shrink-0 flex items-center justify-center"><div className="w-px h-[7px] bg-[#777]" /></div>
    <div className="w-[18px] shrink-0 flex justify-center"><svg width="5" height="9" viewBox="0 0 5 9"><path d="M5 0v9L0 4.500z" fill="#444" /></svg></div>
    <div className="w-[332px] h-full shrink-0 bg-gradient-to-b from-[#f2f4f6] to-[#d5d9de] border-x border-[#8f969d] rounded-[2px] flex items-center justify-center gap-px">
      <div className="w-px h-[7px] bg-[#777]" /><div className="w-px h-[7px] bg-[#777]" /><div className="w-px h-[7px] bg-[#777]" /><div className="w-px h-[7px] bg-[#777]" />
    </div>
    <div className="w-[42px] shrink-0 flex justify-end pr-[5px]"><svg width="5" height="9" viewBox="0 0 5 9"><path d="M0 0v9l5-4.500z" fill="#444" /></svg></div>
    <div className="w-[7px] h-[13px] bg-white border border-[#777] shrink-0 flex items-center justify-center mr-[19px]"><div className="w-px h-[7px] bg-[#777]" /></div>
  </div>
);

const fields: [string, boolean][] = [
  ["Date", false], ["Company", false], ["City", true], ["Region", false], ["Product", false], ["Price", true], ["Quantity", false],
];

const Check = ({ on }: { on: boolean }) => (
  <div className="w-[13px] h-[13px] border border-[#555] bg-white shrink-0 flex items-center justify-center">
    {on && (
      <svg width="9" height="8" viewBox="0 0 9 8"><path d="M.5 4l3 3L8.500.5" fill="none" stroke="#666" /></svg>
    )}
  </div>
);

const TableIcon = () => (
  <svg width="16" height="12" viewBox="0 0 16 12">
    <rect width="16" height="12" fill="#d9e4f5" />
    <path d="M0 .5h16M0 3.500h16M0 6.500h16M0 9.500h16M.5 0v12M3.500 0v12M6.500 0v12M9.500 0v12M12.500 0v12M15.500 0v12" stroke="#7a8fb0" strokeDasharray="1 .5" />
  </svg>
);

const AreaHead = ({ icon, label, w }: { icon: React.ReactNode; label: string; w: string }) => (
  <div className={w + " h-[18px] flex items-center shrink-0"}>
    <div className="w-[25px] flex shrink-0">{icon}</div>
    <span className="whitespace-nowrap">{label}</span>
  </div>
);

const Pill = ({ label }: { label: string }) => (
  <div className="mx-[1px] mt-[1px] h-[18px] border border-[#f0c94e] rounded-[2px] bg-gradient-to-b from-[#fffdf2] to-[#fde9b4] flex items-center justify-between pl-[5px] pr-[10px]">
    {label}
    <Caret c="text-[#333]" w={7} />
  </div>
);

const PivotPanel = () => (
  <div className="w-[245px] shrink-0 h-full flex flex-col bg-[#e9eef3] border-l border-[#8d9399] text-[10.400px] text-[#2b2b2b]">
    <div className="h-[25px] ml-[1px] shrink-0 bg-[#d8dee4] flex items-center justify-between pl-[2px] pr-[8px] text-[11.500px] text-[#333]">
      PivotTable Field List
      <div className="flex items-center gap-[9px]">
        <svg width="16" height="8" viewBox="0 0 16 8"><path d="M0 0h16L8 8z" fill="#222" /></svg>
        <svg width="8" height="8" viewBox="0 0 8 8"><path d="M1 1l6 6M7 1L1 7" stroke="#333" strokeWidth="1.800" /></svg>
      </div>
    </div>
    <div className="flex justify-between items-start pl-[7px] pr-[9px] mt-[8px] h-[24px] shrink-0">
      <span className="leading-[13px] mt-[13px]">Choose fields to add to report:</span>
      <div className="w-[41px] h-[24px] border border-[#a9afb6] bg-[#d8dee4] flex items-center justify-center gap-[6px]">
        <svg width="15" height="15" viewBox="0 0 15 15">
          <path d="M.5 2.500h6v10h-6z" fill="#fff" stroke="#3465a4" />
          <path d="M5.500 4.500h8v10h-8z" fill="#dbe6f4" stroke="#3465a4" />
          <path d="M7 7h5M7 9.500h5M7 12h5" stroke="#3465a4" />
        </svg>
        <Caret c="text-[#222]" w={7} />
      </div>
    </div>
    <div className="ml-[7px] w-[228px] mt-[8px] h-[241px] shrink-0 bg-white border border-[#a5a9ae] pl-[2px] overflow-hidden">
      {fields.map(([f, on]) => (
        <div key={f} className={"h-[18px] flex items-center gap-[2px] " + (on ? "font-bold" : "")}>
          <Check on={on} />
          {f}
        </div>
      ))}
    </div>
    <div className="mt-[8px] h-[1px] bg-white shrink-0" />
    <div className="flex-1 flex flex-col pl-[7px]">
      <div className="mt-[9px] leading-[13px]">Drag fields between areas below:</div>
      <div className="flex mt-[2px] mb-[2px] gap-[9px]">
        <AreaHead w="w-[110px]" label="Report Filter" icon={
          <svg width="14" height="11" viewBox="0 0 14 11"><path d="M0 0h14L8.500 5.500V11l-3-2V5.500z" fill="#555" /></svg>
        } />
        <AreaHead w="w-[110px]" label="Legend Fields ..." icon={<TableIcon />} />
      </div>
      <div className="flex gap-[9px]">
        <div className="w-[110px] h-[79px] bg-white border border-[#a5a9ae]" />
        <div className="w-[110px] h-[79px] bg-white border border-[#a5a9ae]" />
      </div>
      <div className="flex mt-[2px] gap-[9px] h-[20px] items-center">
        <AreaHead w="w-[110px]" label="Axis Fields (Ca..." icon={<TableIcon />} />
        <AreaHead w="w-[110px]" label="Values" icon={<Sigma c="#222" />} />
      </div>
      <div className="flex gap-[9px]">
        <div className="w-[110px] h-[78px] bg-white border border-[#a5a9ae]"><Pill label="City" /></div>
        <div className="w-[110px] h-[78px] bg-white border border-[#a5a9ae]"><Pill label="Sum of Price" /></div>
      </div>
      <div className="flex items-center w-[228px] justify-between mt-[4px] h-[21px]">
        <div className="flex items-center gap-[6px]">
          <div className="w-[13px] h-[13px] border border-[#444] bg-white" />
          Defer Layout Update
        </div>
        <div className="w-[73px] h-[21px] bg-[#c5c6c7] border border-[#b4b5b6] text-[#8b8c8d] flex items-center justify-center">Update</div>
      </div>
    </div>
  </div>
);

const TableGridIcon = () => (
  <svg width="13" height="13" viewBox="0 0 13 13">
    <path d="M.5.500h12v12H.5zM.5 4.500h12M.5 8.500h12M4.500.5v12M8.500.5v12" fill="#fff" stroke="#555" />
  </svg>
);

const StatusBar = () => (
  <div className="h-[20px] shrink-0 flex items-center bg-gradient-to-b from-[#d9dde2] to-[#f2f4f6] text-[11px] text-[#333]">
    <div className="w-[49px] pl-[7px] border-r border-[#c2c7cc] h-full flex items-center">Ready</div>
    <div className="w-[35px] border-r border-[#c2c7cc] h-full flex items-center justify-center">
      <svg width="15" height="14" viewBox="0 0 15 14">
        <rect x="1.500" y="3.500" width="13" height="10" fill="#fff" stroke="#5a7aa8" />
        <rect x="1.500" y="3.500" width="13" height="2.500" fill="#5a7aa8" />
        <path d="M4 8h9M4 10.500h9M7 6v7" stroke="#8aa5c8" />
        <circle cx="3" cy="2.500" r="2.500" fill="#c43c3c" />
      </svg>
    </div>
    <div className="flex-1" />
    <div className="w-px h-full bg-[#c2c7cc] mr-[3px]" />
    <div className="w-[21px] h-[19px] rounded-[3px] border border-[#eac25a] bg-gradient-to-b from-[#fff3b8] to-[#fcd96c] flex items-center justify-center">
      <TableGridIcon />
    </div>
    <div className="ml-[5px] w-[14px] h-[14px] border border-[#666] bg-white flex items-center justify-center">
      <div className="w-[7px] h-[8px] border border-[#777]" />
    </div>
    <div className="ml-[6px] w-[14px] h-[14px] border border-[#666] bg-[#f0f1f3] flex justify-center">
      <div className="w-[5px] h-[8px] border-x border-b border-[#555]" />
    </div>
    <div className="ml-[9px] w-[28px] text-center">100%</div>
    <div className="ml-[7px] w-[16px] h-[16px] rounded-full border border-[#8a9097] bg-white flex items-center justify-center shrink-0">
      <div className="w-[8px] h-[2px] bg-[#333]" />
    </div>
    <div className="relative w-[100px] h-px bg-[#7a8087]">
      <svg width="10" height="14" viewBox="0 0 10 14" className="absolute left-[47px] -top-[7px]">
        <path d="M.5.500h9v9L5 13.500.5 9.500z" fill="#fafafa" stroke="#7a8087" />
      </svg>
    </div>
    <div className="w-[16px] h-[16px] rounded-full border border-[#8a9097] bg-white flex items-center justify-center shrink-0 relative mr-[6px]">
      <div className="w-[8px] h-[2px] bg-[#333]" />
      <div className="absolute w-[2px] h-[8px] bg-[#333]" />
    </div>
  </div>
);

export default function App() {
  return (
    <div className="w-[1280px] h-[759px] overflow-hidden flex flex-col bg-[#e1e5ea] font-['Open_Sans',sans-serif]">
      <TitleBar />
      <TabRow />
      <Ribbon />
      <FormulaBar />
      <div className="h-[4px] shrink-0 bg-[#e1e5ea]" />
      <div className="flex flex-1 min-h-0">
        <div className="w-[1035px] shrink-0 flex flex-col">
          <div className="flex h-[559px]">
            <div className="w-[1019px] overflow-hidden shrink-0"><Sheet /></div>
            <VScroll />
          </div>
          <SheetTabs />
        </div>
        <PivotPanel />
      </div>
      <StatusBar />
    </div>
  );
}
